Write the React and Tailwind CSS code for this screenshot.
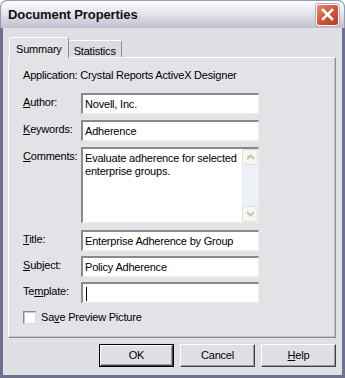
import React from 'react';

const font = "font-['Liberation_Sans','Arial',sans-serif]";

const U = ({ children }) => <span className="underline underline-offset-[1px]">{children}</span>;

const Field = ({ label, value, className = '', caret }) => (
  <div className={`flex ${className}`}>
    <div className="w-[58px] pt-[3px] leading-[13px]">{label}</div>
    <div className="w-[178px] h-[21px] bg-white border-t-2 border-l-2 border-t-[#8a8a8a] border-l-[#8a8a8a] border-b border-r border-b-[#f1efe2] border-r-[#f1efe2] flex items-center pl-[2px] pt-px leading-[13px]">
      {caret ? <span className="w-px h-[14px] bg-black ml-px" /> : value}
    </div>
  </div>
);

const Chevron = ({ up }) => (
  <svg width="9" height="6" viewBox="0 0 9 6">
    <path d={up ? 'M1 5 L4.5 1.5 L8 5' : 'M1 1 L4.5 4.5 L8 1'} fill="none" stroke="#c4c2b8" strokeWidth="2" />
  </svg>
);

const Button = ({ children, isDefault }) => (
  <div className={`w-[75px] h-[23px] ${isDefault ? 'border border-black' : ''}`}>
    <div className="w-full h-full flex items-center justify-center bg-[#e0dfe3] border-t border-l border-t-white border-l-white border-b border-r border-b-[#404040] border-r-[#404040] shadow-[inset_-1px_-1px_0_#9d9da1]">
      {children}
    </div>
  </div>
);

export default function App() {
  return (
    <div className={`w-[345px] h-[378px] flex flex-col bg-[#8d8daa] rounded-t-[7px] overflow-hidden text-[11px] tracking-[-0.2px] text-black ${font}`}>
      <div className="h-[28px] shrink-0 flex items-center justify-between pl-[7px] pr-[5px] bg-gradient-to-b from-[#fdfdfe] via-[#e2e2ea] to-[#c0c0d1] border-x border-t border-[#9a9ab2] rounded-t-[7px]">
        <span className="text-[13px] font-bold tracking-[-0.1px] text-[#111]">Document Properties</span>
        <div className="w-[23px] h-[22px] rounded-[3px] border border-white bg-gradient-to-br from-[#e88a6c] via-[#d2543a] to-[#b83a22] flex items-center justify-center shadow-[0_0_0_1px_#b0b0c0]">
          <svg width="13" height="13" viewBox="0 0 13 13">
            <path d="M2 2 L11 11 M11 2 L2 11" stroke="white" strokeWidth="2.6" strokeLinecap="square" />
          </svg>
        </div>
      </div>
      <div className="flex-1 flex flex-col px-[3px] pb-[3px] bg-[#6f6f92]">
        <div className="flex-1 flex flex-col bg-[#e0dfe3] pl-[5px] pr-[6px] pt-[9px]">
          <div className="flex items-end pl-px h-[20px]">
            <div className="relative z-10 h-[21px] -mb-px px-[6px] pt-[3px] bg-[#e3e2e7] border-t border-l border-t-white border-l-white border-r border-r-[#8e8e92] rounded-t-[2px]">
              Summary
            </div>
            <div className="h-[17px] px-[5px] pt-[2px] bg-[#dcdbe0] border-t border-r border-t-white border-r-[#8e8e92] rounded-tr-[2px]">
              Statistics
            </div>
          </div>
          <div className="h-[281px] bg-[#e3e2e7] border-t border-l border-t-white border-l-white border-r border-b border-r-[#8e8e92] border-b-[#8e8e92] shadow-[inset_-1px_-1px_0_#c4c3c9] pl-[14px] pt-[11px]">
            <div className="leading-[13px]">Application: Crystal Reports ActiveX Designer</div>
            <Field className="mt-[11px]" label={<><U>A</U>uthor:</>} value="Novell, Inc." />
            <Field className="mt-[6px]" label={<><U>K</U>eywords:</>} value="Adherence" />
            <div className="flex mt-[6px]">
              <div className="w-[58px] pt-[3px] leading-[13px]"><U>C</U>omments:</div>
              <div className="w-[178px] h-[76px] bg-white border-t-2 border-l-2 border-t-[#8a8a8a] border-l-[#8a8a8a] border-b border-r border-b-[#f1efe2] border-r-[#f1efe2] flex">
                <div className="flex-1 pl-[2px] pt-[3px] leading-[13px]">
                  Evaluate adherence for selected enterprise groups.
                </div>
                <div className="w-[16px] flex flex-col justify-between bg-[#eef0f7]">
                  <div className="h-[16px] bg-[#f7f6f1] border border-[#e2e0d6] rounded-[2px] flex items-center justify-center"><Chevron up /></div>
                  <div className="h-[16px] bg-[#f7f6f1] border border-[#e2e0d6] rounded-[2px] flex items-center justify-center"><Chevron /></div>
                </div>
              </div>
            </div>
            <Field className="mt-[7px]" label={<><U>T</U>itle:</>} value="Enterprise Adherence by Group" />
            <Field className="mt-[5px]" label={<><U>S</U>ubject:</>} value="Policy Adherence" />
            <Field className="mt-[5px]" label={<>Te<U>m</U>plate:</>} caret />
            <div className="flex items-center mt-[8px]">
              <div className="w-[13px] h-[13px] bg-white border-t border-l border-t-[#8a8a8a] border-l-[#8a8a8a] border-b border-r border-b-[#dcdbd2] border-r-[#dcdbd2] shadow-[inset_1px_1px_0_#c8c8c8]" />
              <span className="ml-[5px] leading-[13px]">Sa<U>v</U>e Preview Picture</span>
            </div>
          </div>
          <div className="flex justify-end gap-[6px] mt-[6px]">
            <Button isDefault>OK</Button>
            <Button>Cancel</Button>
            <Button><U>H</U>elp</Button>
          </div>
        </div>
      </div>
    </div>
  );
}
